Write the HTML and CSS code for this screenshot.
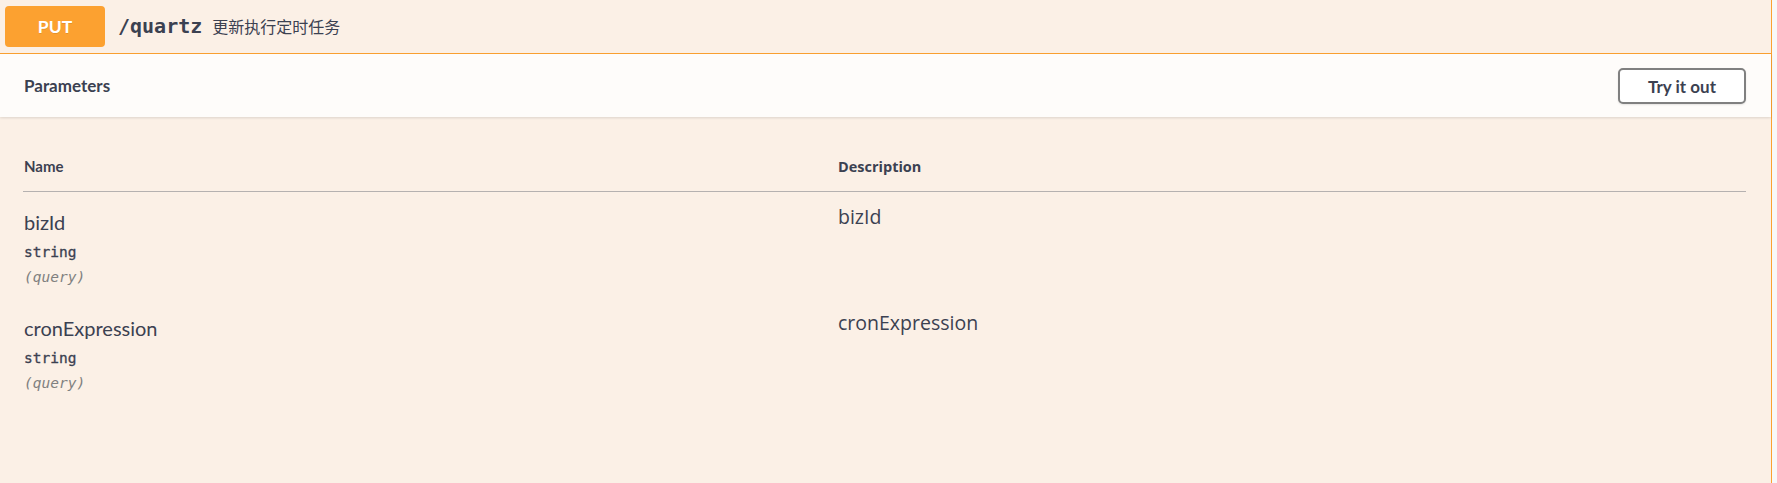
FILE: index.html
```html
<!DOCTYPE html>
<html lang="zh-CN">
<head>
<meta charset="utf-8">
<title>PUT /quartz</title>
<link rel="stylesheet" href="styles.css">
</head>
<body>
<div class="page">
  <div class="opblock">
    <div class="summary">
      <span class="method">PUT</span>
      <span class="path">/quartz</span>
      <span class="summary-desc">更新执行定时任务</span>
    </div>
    <div class="section-header">
      <h4 class="section-title">Parameters</h4>
      <button class="btn">Try it out</button>
    </div>
    <div class="table-container">
      <table class="parameters">
        <thead>
          <tr>
            <th class="col-name">Name</th>
            <th class="col-desc">Description</th>
          </tr>
        </thead>
        <tbody>
          <tr>
            <td class="col-name">
              <div class="param-name">bizId</div>
              <div class="param-type">string</div>
              <div class="param-in">(query)</div>
            </td>
            <td class="col-desc"><p class="desc-text">bizId</p></td>
          </tr>
          <tr>
            <td class="col-name">
              <div class="param-name">cronExpression</div>
              <div class="param-type">string</div>
              <div class="param-in">(query)</div>
            </td>
            <td class="col-desc"><p class="desc-text">cronExpression</p></td>
          </tr>
        </tbody>
      </table>
    </div>
  </div>
</div>
</body>
</html>
```
FILE: styles.css
```css
html, body {
  margin: 0;
  padding: 0;
  background: #f8f8f8;
  height: 100%;
}

.page {
  display: flex;
  height: 483px;
  overflow: hidden;
}

.opblock {
  width: 1771px;
  flex: none;
  background: #fbf0e6;
  border-right: 1px solid #fca130;
  color: #3b4151;
  font-family: Lato, "Open Sans", sans-serif;
}

.summary {
  box-sizing: border-box;
  height: 54px;
  display: flex;
  align-items: center;
  padding: 0 5px 1px 5px;
  border-bottom: 1px solid #fca130;
}

.method {
  width: 100px;
  height: 41px;
  display: flex;
  align-items: center;
  justify-content: center;
  background: #fca130;
  color: #fff;
  border-radius: 4px;
  font-family: Lato, "Open Sans", sans-serif;
  font-weight: 700;
  font-size: 17.5px;
  text-shadow: 0 1px 0 rgba(0, 0, 0, 0.1);
}

.path {
  padding: 0 10px 0 13px;
  font-family: "DejaVu Sans Mono", monospace;
  font-weight: 600;
  font-size: 20px;
  color: #3b4151;
}

.summary-desc {
  font-family: "Noto Sans CJK SC", sans-serif;
  font-size: 16px;
  color: #3b4151;
}

.section-header {
  box-sizing: border-box;
  height: 63px;
  display: flex;
  align-items: center;
  justify-content: space-between;
  padding: 0 25px 0 24px;
  background: rgba(255, 255, 255, 0.8);
  box-shadow: 0 1px 2.5px rgba(0, 0, 0, 0.12);
  position: relative;
}

.section-title {
  margin: 0;
  font-size: 17px;
  font-weight: 700;
  color: #3b4151;
}

.btn {
  box-sizing: border-box;
  width: 128px;
  height: 36px;
  margin-top: 1px;
  border: 2.5px solid #808080;
  border-radius: 5px;
  background: #fff;
  color: #3b4151;
  font-family: Lato, "Open Sans", sans-serif;
  font-weight: 700;
  font-size: 17px;
  box-shadow: 0 1px 2px rgba(0, 0, 0, 0.1);
  padding: 0;
}

.table-container {
  padding: 25px 25px 0 23px;
}

.parameters {
  width: 100%;
  border-collapse: collapse;
}

.parameters th {
  text-align: left;
  font-size: 15px;
  font-weight: 700;
  line-height: 19px;
  padding: 15px 0 15px 1px;
  border-bottom: 1.5px solid rgba(59, 65, 81, 0.2);
  color: #3b4151;
}

.parameters th.col-desc {
  font-family: "Open Sans", sans-serif;
  font-size: 14.5px;
}

.parameters th.col-name {
  width: 813px;
}

.parameters td {
  vertical-align: top;
  padding: 16px 0 11px 1px;
}

.param-name {
  font-size: 20px;
  font-weight: 400;
  line-height: 28px;
  color: #3b4151;
}

.param-type {
  font-family: "DejaVu Sans Mono", monospace;
  font-weight: 400;
  font-size: 14.5px;
  line-height: 19px;
  padding: 7px 0 6px;
  color: #3b4151;
  -webkit-text-stroke: 0.3px #3b4151;
}

.param-in {
  font-family: "DejaVu Sans Mono", monospace;
  font-style: italic;
  font-size: 14.5px;
  line-height: 19px;
  color: #808080;
}

.desc-text {
  margin: -4px 0 0 0;
  font-family: "Open Sans", sans-serif;
  font-size: 19.5px;
  line-height: 26px;
  color: #3b4151;
}
```
